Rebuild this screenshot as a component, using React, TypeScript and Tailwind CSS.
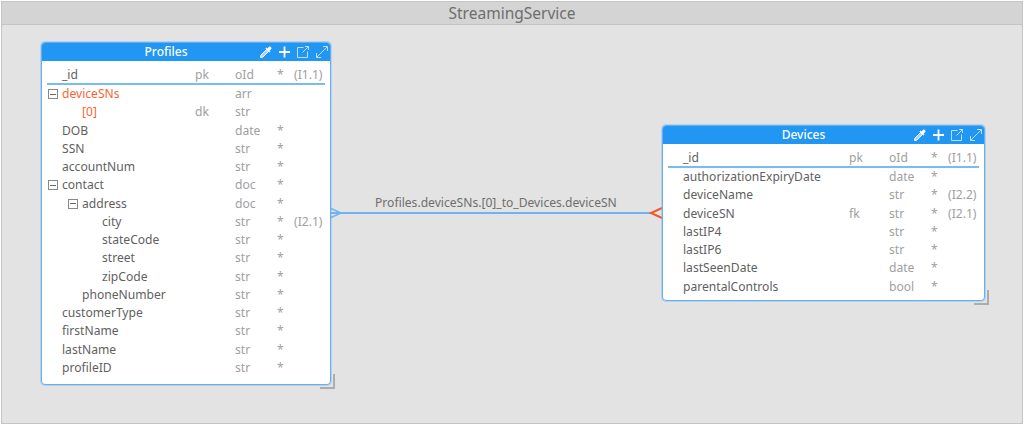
type Row = {
  name: string;
  indent?: number;
  toggle?: boolean;
  key?: string;
  type: string;
  req?: boolean;
  idx?: string;
  hot?: boolean;
};

const profiles: Row[] = [
  { name: "deviceSNs", toggle: true, type: "arr", hot: true },
  { name: "[0]", indent: 20, key: "dk", type: "str", hot: true },
  { name: "DOB", type: "date", req: true },
  { name: "SSN", type: "str", req: true },
  { name: "accountNum", type: "str", req: true },
  { name: "contact", toggle: true, type: "doc", req: true },
  { name: "address", indent: 20, toggle: true, type: "doc", req: true },
  { name: "city", indent: 40, type: "str", req: true, idx: "(I2.1)" },
  { name: "stateCode", indent: 40, type: "str", req: true },
  { name: "street", indent: 40, type: "str", req: true },
  { name: "zipCode", indent: 40, type: "str", req: true },
  { name: "phoneNumber", indent: 20, type: "str", req: true },
  { name: "customerType", type: "str", req: true },
  { name: "firstName", type: "str", req: true },
  { name: "lastName", type: "str", req: true },
  { name: "profileID", type: "str", req: true },
];

const devices: Row[] = [
  { name: "authorizationExpiryDate", type: "date", req: true },
  { name: "deviceName", type: "str", req: true, idx: "(I2.2)" },
  { name: "deviceSN", key: "fk", type: "str", req: true, idx: "(I2.1)" },
  { name: "lastIP4", type: "str", req: true },
  { name: "lastIP6", type: "str", req: true },
  { name: "lastSeenDate", type: "date", req: true },
  { name: "parentalControls", type: "bool", req: true },
];

function HeaderIcons() {
  return (
    <div className="absolute right-[1px] top-[2px] flex items-center gap-[5px]">
      {/* pipette */}
      <svg width="14" height="14" viewBox="0 0 14 14" fill="none">
        <path d="M7.5 4.5 9.5 6.5 4 12 1.5 12.5 2 10Z" stroke="white" strokeWidth="1" fill="#a9d6fa" />
        <path d="M6.5 3.5 7.5 2.5 8.5 3.5 10 1.7C11 .6 13.4 3 12.3 4L10.5 5.5 11.5 6.5 10.5 7.5Z" fill="white" />
      </svg>
      <svg width="13" height="14" viewBox="0 0 13 14" fill="none">
        <path d="M6.5 1.5V12.5M1 7H12" stroke="white" strokeWidth="1.8" />
      </svg>
      <svg width="14" height="14" viewBox="0 0 14 14" fill="none" className="opacity-70">
        <path d="M7.5 2.5H1.5V12.5H11.5V6.5M6.5 7.5 12.5 1.5M9 1.5H12.5V5" stroke="white" strokeWidth="1" />
      </svg>
      <svg width="14" height="14" viewBox="0 0 14 14" fill="none" className="opacity-70">
        <path d="M1.5 12.5 12.5 1.5M8 1.5H12.5V6M1.5 8V12.5H6" stroke="white" strokeWidth="1" />
      </svg>
    </div>
  );
}

function Toggle() {
  return (
    <span className="absolute left-[-14px] top-[4px] flex h-[10px] w-[10px] items-center justify-center border border-[#888888]">
      <span className="h-px w-[6px] bg-[#666666]" />
    </span>
  );
}

function FieldRow({ row, nameClass }: { row: Row; nameClass: string }) {
  return (
    <div className="flex h-[18.25px] items-center leading-[18px]">
      <div className={`shrink-0 ${nameClass} ${row.hot ? "text-[#fb6534]" : "text-[#5f5f5f]"}`}>
        <span className="relative inline-block" style={{ marginLeft: row.indent ?? 0 }}>
          {row.toggle && <Toggle />}
          {row.name}
        </span>
      </div>
      <div className="w-[40px] shrink-0 text-[#a0a0a0]">{row.key}</div>
      <div className="w-[42px] shrink-0 text-[#a0a0a0]">{row.type}</div>
      <div className="w-[17px] shrink-0 text-[#a0a0a0]">{row.req ? "*" : ""}</div>
      <div className="text-[#a0a0a0]">{row.idx}</div>
    </div>
  );
}

function Entity({ title, rows, nameClass, className }: { title: string; rows: Row[]; nameClass: string; className: string }) {
  return (
    <div className={`absolute rounded-[4px] border border-[#64b0f0] bg-white shadow-[0_0_0_1px_rgba(100,176,240,0.35)] ${className}`}>
      <div className="relative flex h-[18px] items-center justify-center rounded-t-[3px] bg-[#2196f3] pr-[40px] text-[12px] font-medium text-white">
        {title}
        <HeaderIcons />
      </div>
      <div className="pl-[20px] pt-[5px] text-[12.1px]">
        <div className="flex h-[17px] items-center leading-[18px]">
          <div className={`shrink-0 text-[#5f5f5f] ${nameClass}`}>_id</div>
          <div className="w-[40px] shrink-0 text-[#a0a0a0]">pk</div>
          <div className="w-[42px] shrink-0 text-[#a0a0a0]">oId</div>
          <div className="w-[17px] shrink-0 text-[#a0a0a0]">*</div>
          <div className="text-[#a0a0a0]">(I1.1)</div>
        </div>
        <div className="ml-[-15px] mr-[5px] h-[2px] bg-[#79bcf3]" />
        {rows.map((row) => (
          <FieldRow key={row.name} row={row} nameClass={nameClass} />
        ))}
      </div>
      {/* resize handle */}
      <div className="absolute bottom-[-5px] right-[-5px] h-[15px] w-[15px] border-b-2 border-r-2 border-[#adadad]" />
    </div>
  );
}

export default function App() {
  return (
    <div className="relative h-[425px] w-[1024px] overflow-hidden bg-white font-['Noto_Sans','Open_Sans',sans-serif]">
      <div className="absolute inset-x-[1px] bottom-[1px] top-[1px] border border-[#c4c4c4] bg-[#e3e3e3]">
        <div className="flex h-[23px] items-center justify-center border-b border-[#c4c4c4] bg-[#d4d4d4] pt-px text-[15.5px] text-[#6e6e6e]">
          StreamingService
        </div>
      </div>

      {/* relationship line */}
      <svg className="absolute left-0 top-0" width="1024" height="425" fill="none">
        <path d="M330 213H651" stroke="#6db5f2" strokeWidth="2" />
        <path d="M330 208 341 213 330 218M330 213H341" stroke="#6db5f2" strokeWidth="1.5" />
        <path d="M662 208 651 213 662 218" stroke="#f4572a" strokeWidth="2" />
      </svg>
      <div className="absolute left-[375px] top-[194px] text-[12.1px] leading-[18px] text-[#6e6e6e]">
        Profiles.deviceSNs.[0]_to_Devices.deviceSN
      </div>

      <Entity title="Profiles" rows={profiles} nameClass="w-[133px]" className="left-[41px] top-[42px] h-[343px] w-[290px]" />
      <Entity title="Devices" rows={devices} nameClass="w-[166px]" className="left-[662px] top-[125px] h-[176px] w-[323px]" />
    </div>
  );
}
